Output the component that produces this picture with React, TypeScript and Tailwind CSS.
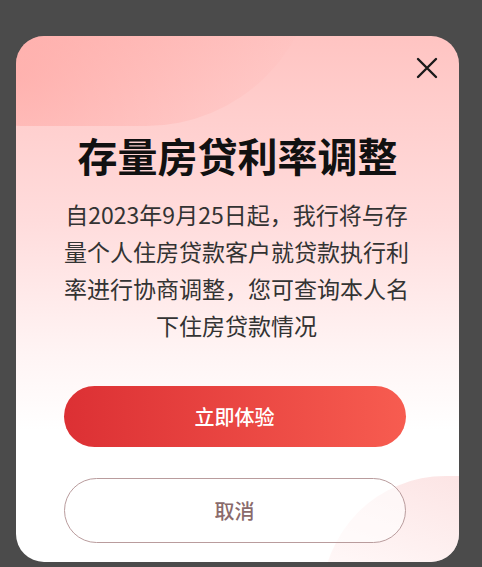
import React from "react";

export default function App() {
  return (
    <div className="w-[482px] h-[567px] bg-[#4b4b4b] overflow-hidden pt-[36px] pl-[16px]" style={{ fontFamily: '"Noto Sans CJK SC", "Noto Sans", sans-serif' }}>
      <div className="relative w-[443px] h-[526px] rounded-[28px] overflow-hidden bg-[linear-gradient(180deg,#ffc4c2_0%,#ffdcdc_35%,#fff4f4_60%,#ffffff_75%)]">
        {/* decorative arcs */}
        <div className="absolute -left-[160px] -top-[250px] w-[460px] h-[340px] rounded-full bg-[radial-gradient(ellipse_at_35%_85%,rgba(255,150,145,0.45),rgba(255,170,165,0.0)_70%)]" />
        <div className="absolute -right-[220px] -bottom-[161px] w-[357px] h-[247px] rounded-full bg-[linear-gradient(200deg,rgba(250,215,215,0.95),rgba(255,238,238,0.5)_55%)]" />
        <button className="absolute right-[21px] top-[21px] w-[22px] h-[22px]">
          <svg viewBox="0 0 22 22" width="22" height="22">
            <path d="M2 2 L20 20 M20 2 L2 20" stroke="#1a1a1a" strokeWidth="2.4" strokeLinecap="round" />
          </svg>
        </button>
        <div className="relative flex flex-col items-center pr-[6px]">
          <h1 className="mt-[92px] ml-[6px] text-[40px] leading-[54px] font-bold text-[#111]">存量房贷利率调整</h1>
          <p className="mt-[14px] ml-[4px] text-[23px] leading-[37px] text-[#333333] text-center">
            <span className="block">自2023年9月25日起，我行将与存</span>
            <span className="block">量个人住房贷款客户就贷款执行利</span>
            <span className="block">率进行协商调整，您可查询本人名</span>
            <span className="block">下住房贷款情况</span>
          </p>
          <button className="mt-[42px] w-[342px] h-[61px] rounded-full bg-[linear-gradient(90deg,#dc3034,#f75c50)] text-white text-[20px] font-medium">立即体验</button>
          <button className="mt-[31px] w-[342px] h-[65px] rounded-full border-[1.5px] border-[#b99c9d] bg-white/60 text-[#8a6a6b] text-[20px] font-medium">取消</button>
        </div>
      </div>
    </div>
  );
}
